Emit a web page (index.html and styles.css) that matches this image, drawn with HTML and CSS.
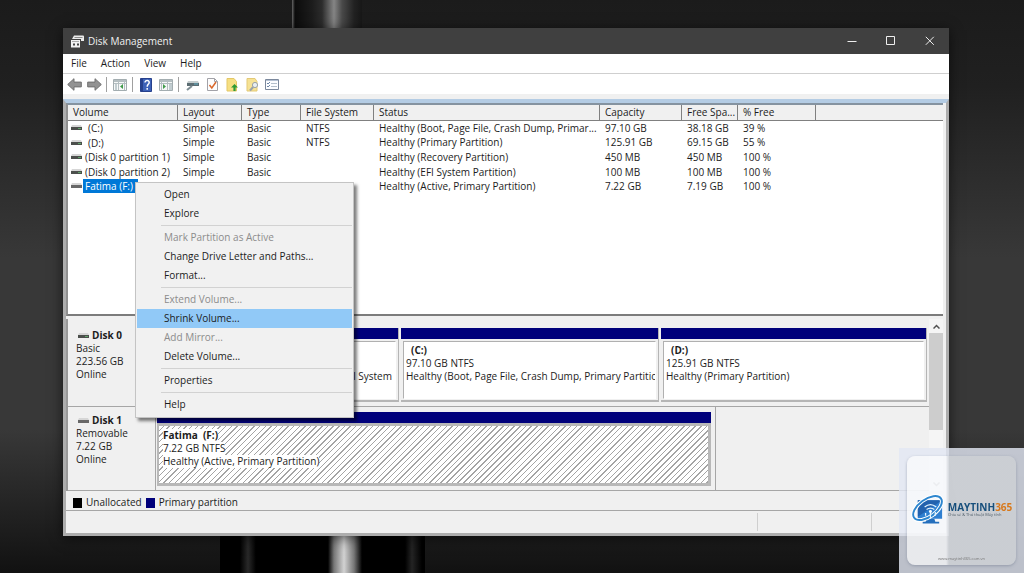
FILE: index.html
```html
<!DOCTYPE html>
<html lang="en">
<head>
  <meta charset="UTF-8">
  <meta name="viewport" content="width=device-width, initial-scale=1.0">
  <title>Disk Management</title>
  <link rel="stylesheet" href="styles.css">
</head>
<body>
  <svg class="defs" width="0" height="0" aria-hidden="true">
    <symbol id="drive" viewBox="0 0 11 6">
      <path d="M1 0h9l1 2H0z" fill="#d6d6d6"/>
      <path d="M0 2h11v3H0z" fill="#4c4f4c"/>
      <path d="M7 3h3v1H7z" fill="#5fa56a"/>
    </symbol>
    <symbol id="drive-usb" viewBox="0 0 11 6">
      <path d="M1 0h9l1 2H0z" fill="#d6d6d6"/>
      <path d="M0 2h11v3H0z" fill="#686868"/>
    </symbol>
    <symbol id="arrow" viewBox="0 0 15 13">
      <path d="M7 .7v3.400h7.300v4.800H7v3.400L.7 6.500z" fill="#929292" stroke="#707070"/>
    </symbol>
  </svg>

  <main class="window">
    <header class="titlebar">
      <svg width="14" height="13" viewBox="0 0 14 13">
        <path d="M4 .5h9q1 0 1 1V6h-3V4H2z" fill="#ececec"/>
        <path d="M4.500 2.500h8" stroke="#8a8a8a"/>
        <path d="M1 5h9v7.500H1z" fill="#f2f2f2"/>
        <path d="M2 6.500h7" stroke="#aaa"/>
        <path d="M3 8.500h2v2H3zM7 8.500h2v2H7z" fill="#444"/>
      </svg>
      <h1>Disk Management</h1>
      <div class="window-buttons">
        <button aria-label="Minimize"><svg width="10" height="10"><path d="M.5 5.500h9"/></svg></button>
        <button aria-label="Maximize"><svg width="10" height="10"><path d="M.5.5h8v8h-8z"/></svg></button>
        <button aria-label="Close"><svg width="10" height="10"><path d="M.8.8l8 8M8.800.8l-8 8"/></svg></button>
      </div>
    </header>

    <nav class="menubar">
      <button>File</button>
      <button>Action</button>
      <button>View</button>
      <button>Help</button>
    </nav>

    <div class="toolbar">
      <button aria-label="Back"><svg width="15" height="13"><use href="#arrow"/></svg></button>
      <button aria-label="Forward"><svg class="flip" width="15" height="13"><use href="#arrow"/></svg></button>
      <span class="divider"></span>
      <button aria-label="Show console tree">
        <svg width="14" height="12" viewBox="0 0 14 12">
          <path d="M.5.5h13v11H.5z" fill="#f6f8f8" stroke="#a3adb0"/>
          <path d="M1 1h12v2H1z" fill="#b4bec1"/>
          <path d="M5.500 3v8M11.500 3v8M1 4.500h12" stroke="#b4bec1"/>
          <path d="M2 6h2M2 8h2M2 10h2" stroke="#8ea3aa"/>
          <path d="M10 5v5L7 7.500z" fill="#3f9a4a"/>
        </svg>
      </button>
      <span class="divider"></span>
      <button aria-label="Help topics">
        <svg width="12" height="14" viewBox="0 0 12 14">
          <path d="M.5.5h11v13H.5z" fill="#3d62b8" stroke="#27418c"/>
          <path d="M1 1h2v12H1z" fill="#27418c"/>
          <path d="M5 4.600c0-3 4.400-2.800 4.200 0C9 6.500 7.200 6.300 7.200 8.700M7.200 10v1.700" fill="none" stroke="#fff" stroke-width="1.500"/>
        </svg>
      </button>
      <button aria-label="Show action pane">
        <svg width="14" height="12" viewBox="0 0 14 12">
          <path d="M.5.5h13v11H.5z" fill="#f6f8f8" stroke="#a3adb0"/>
          <path d="M1 1h12v2H1z" fill="#b4bec1"/>
          <path d="M2.500 3v8M8.500 3v8M1 4.500h12" stroke="#b4bec1"/>
          <path d="M10 6h3M10 8h3M10 10h3" stroke="#8ea3aa"/>
          <path d="M4 5v5l3-2.500z" fill="#3f9a4a"/>
        </svg>
      </button>
      <span class="divider"></span>
      <button aria-label="Refresh">
        <svg width="14" height="12" viewBox="0 0 14 12">
          <path d="M3 2h10l1 2H2z" fill="#c4cccd"/>
          <path d="M2 4h12v3H2z" fill="#5c6d73"/>
          <path d="M9 5h4" stroke="#62b2c8"/>
          <path d="M2 11l5-4" stroke="#7d8c92" stroke-width="2"/>
        </svg>
      </button>
      <button aria-label="Check disk">
        <svg width="11" height="13" viewBox="0 0 11 13">
          <path d="M.5.5h7l3 3v9H.5z" fill="#fdfdfd" stroke="#a2a2a8"/>
          <path d="M7.500.5v3h3" fill="none" stroke="#a2a2a8"/>
          <path d="M2.500 7l2.300 3L9 4" fill="none" stroke="#d9682c" stroke-width="1.500"/>
        </svg>
      </button>
      <button aria-label="Open parent">
        <svg width="13" height="14" viewBox="0 0 13 14">
          <path d="M1 .5h7l2.500 3v9.500H1z" fill="#f6df82" stroke="#e3c767"/>
          <path d="M8.500 6l3.500 3.500H9.600V13H7.400V9.500H5z" fill="#2f9a35"/>
        </svg>
      </button>
      <button aria-label="Search">
        <svg width="13" height="14" viewBox="0 0 13 14">
          <path d="M1 .5h8l2 3v9.500H1z" fill="#f6e294" stroke="#e3c977"/>
          <circle cx="9" cy="7" r="2.600" fill="#e8eef2" stroke="#9aa2a6"/>
          <path d="M7.200 9L4 12.500" stroke="#9aa2a6" stroke-width="2"/>
        </svg>
      </button>
      <button aria-label="Properties">
        <svg width="14" height="11" viewBox="0 0 14 11">
          <path d="M.5.5h13v10H.5z" fill="#fcfdff" stroke="#7b889c"/>
          <path d="M1 1.500h12" stroke="#b5c1d2"/>
          <path d="M6 4.500h6M6 7.500h6" stroke="#b4bfcb"/>
          <path d="M2 4l1 1 2-2M2 7l1 1 2-2" fill="none" stroke="#6c84a4"/>
        </svg>
      </button>
    </div>

    <section class="console">
      <div class="volumes">
        <table>
          <colgroup>
            <col class="c-volume"><col class="c-layout"><col class="c-type"><col class="c-fs"><col class="c-status">
            <col class="c-capacity"><col class="c-free"><col class="c-percent"><col>
          </colgroup>
          <thead>
            <tr><th>Volume</th><th>Layout</th><th>Type</th><th>File System</th><th>Status</th><th>Capacity</th><th>Free Spa...</th><th>% Free</th><th></th></tr>
          </thead>
          <tbody>
            <tr><td><svg width="11" height="6"><use href="#drive"/></svg><span class="name letter">(C:)</span></td><td>Simple</td><td>Basic</td><td>NTFS</td><td>Healthy (Boot, Page File, Crash Dump, Primar...</td><td>97.10 GB</td><td>38.18 GB</td><td>39 %</td><td></td></tr>
            <tr><td><svg width="11" height="6"><use href="#drive"/></svg><span class="name letter">(D:)</span></td><td>Simple</td><td>Basic</td><td>NTFS</td><td>Healthy (Primary Partition)</td><td>125.91 GB</td><td>69.15 GB</td><td>55 %</td><td></td></tr>
            <tr><td><svg width="11" height="6"><use href="#drive"/></svg><span class="name">(Disk 0 partition 1)</span></td><td>Simple</td><td>Basic</td><td></td><td>Healthy (Recovery Partition)</td><td>450 MB</td><td>450 MB</td><td>100 %</td><td></td></tr>
            <tr><td><svg width="11" height="6"><use href="#drive"/></svg><span class="name">(Disk 0 partition 2)</span></td><td>Simple</td><td>Basic</td><td></td><td>Healthy (EFI System Partition)</td><td>100 MB</td><td>100 MB</td><td>100 %</td><td></td></tr>
            <tr><td><svg width="11" height="6"><use href="#drive-usb"/></svg><span class="name selected">Fatima (F:)</span></td><td>Simple</td><td>Basic</td><td>NTFS</td><td>Healthy (Active, Primary Partition)</td><td>7.22 GB</td><td>7.19 GB</td><td>100 %</td><td></td></tr>
          </tbody>
        </table>

        <div class="context-menu" role="menu">
          <button role="menuitem">Open</button>
          <button role="menuitem">Explore</button>
          <hr>
          <button role="menuitem" disabled>Mark Partition as Active</button>
          <button role="menuitem">Change Drive Letter and Paths...</button>
          <button role="menuitem">Format...</button>
          <hr>
          <button role="menuitem" disabled>Extend Volume...</button>
          <button role="menuitem" class="active">Shrink Volume...</button>
          <button role="menuitem" disabled>Add Mirror...</button>
          <button role="menuitem">Delete Volume...</button>
          <hr>
          <button role="menuitem">Properties</button>
          <hr>
          <button role="menuitem">Help</button>
        </div>
      </div>

      <div class="graph">
        <div class="disks">
          <div class="disk">
            <div class="disk-label">
              <h2><svg width="11" height="6"><use href="#drive"/></svg>Disk 0</h2>
              <p>Basic</p>
              <p>223.56 GB</p>
              <p>Online</p>
            </div>
            <div class="partitions four">
              <div class="partition"><div class="info"></div></div>
              <div class="partition"><div class="info align-end"><b></b><p>&nbsp;</p><p>EFI System</p></div></div>
              <div class="partition"><div class="info"><b class="letter">(C:)</b><p>97.10 GB NTFS</p><p>Healthy (Boot, Page File, Crash Dump, Primary Partition)</p></div></div>
              <div class="partition"><div class="info"><b class="letter">(D:)</b><p>125.91 GB NTFS</p><p>Healthy (Primary Partition)</p></div></div>
            </div>
          </div>
          <div class="disk removable">
            <div class="disk-label">
              <h2><svg width="11" height="6"><use href="#drive-usb"/></svg>Disk 1</h2>
              <p>Removable</p>
              <p>7.22 GB</p>
              <p>Online</p>
            </div>
            <div class="partitions single">
              <div class="partition hatched"><div class="info"><b>Fatima&nbsp; (F:)</b><p>7.22 GB NTFS</p><p>Healthy (Active, Primary Partition)</p></div></div>
            </div>
          </div>
        </div>
        <div class="scrollbar">
          <button aria-label="Scroll up"><svg width="7" height="5"><path d="M.5 4.500l3-3 3 3"/></svg></button>
          <div class="thumb"></div>
          <button aria-label="Scroll down"><svg width="7" height="5"><path d="M.5.5l3 3 3-3"/></svg></button>
        </div>
      </div>

      <div class="legend">
        <span class="swatch black"></span>Unallocated
        <span class="swatch navy"></span>Primary partition
      </div>
      <footer class="statusbar"><span></span><span></span><span></span></footer>
    </section>
  </main>

  <aside class="watermark">
    <div class="card">
      <div class="brand">
        <svg width="35" height="32" viewBox="0 0 36 32">
          <path d="M7 6h25v19H7z" fill="#2f7fd0"/>
          <path d="M7 6h25L7 23z" fill="#2362ae"/>
          <path d="M16 25h8l1 3h4v2H12v-2h3z" fill="#256fbd"/>
          <ellipse cx="17" cy="14" rx="17" ry="9" transform="rotate(-36 17 14)" fill="none" stroke="#fff" stroke-width="4"/>
          <ellipse cx="17" cy="14" rx="17" ry="9" transform="rotate(-36 17 14)" fill="none" stroke="#2d86cf" stroke-width="2"/>
          <path d="M14 13q6-5 12 0M16 15.500q4-3 8 0M20 17v8M15 22v-3M25 22v-4" fill="none" stroke="#e5f5ff" stroke-width="1.300"/>
          <circle cx="20" cy="17.500" r="1.500" fill="#fff"/>
        </svg>
        <div>
          <strong>MAYTINH<em>365</em></strong>
          <small>Chia sẻ &amp; Thủ thuật Máy tính</small>
        </div>
      </div>
      <span class="site">www.maytinh365.com.vn</span>
    </div>
  </aside>
</body>
</html>
```
FILE: styles.css
```css
*, *::before, *::after {
  box-sizing: border-box;
}

:root {
  --face: #f0f0f0;
  --line: #a6a6a6;
  --navy: #00007b;
}

body {
  margin: 0;
  min-height: 100vh;
  display: flex;
  flex-direction: column;
  padding: 28px 75px 37px 63px;
  font: 10px/13px "Open Sans", "Noto Sans", sans-serif;
  color: #1c1c1c;
  /* dark wallpaper, bottle neck above and base below the window */
  background:
    linear-gradient(90deg, #666 0, #0c0c0c 3px, #1c1c1c 20px, #2c2c2c 30px, #858585 42px, #4a4a4a 50px, #222 62px, #171717) 292px 0 / 70px 28px no-repeat,
    linear-gradient(90deg, #000 20px, #292929 28px, #000 36px, #000 108px, #777 114px, #d2d2d2 124px, #777 134px, #000 142px, #000 185px, #242424 192px, #000 202px) 220px 100% / 205px 37px no-repeat,
    linear-gradient(180deg, #1b1b1b 0, #202020 15%, #383838 45%, #383838 75%, #1e1e1e 92%, #111 100%);
}

h1, h2, p {
  margin: 0;
  font-size: inherit;
}

button {
  border: 0;
  padding: 0;
  background: none;
  font: inherit;
  color: inherit;
}

svg {
  display: block;
  flex: none;
}

.defs {
  position: absolute;
}

.window {
  flex: 1;
  display: flex;
  flex-direction: column;
  background: #fff;
  box-shadow: 0 2px 12px rgba(0, 0, 0, 0.6);
}

.titlebar {
  height: 26px;
  display: flex;
  align-items: center;
  gap: 4px;
  padding-left: 7px;
  background: #404040;
  color: #f0f0f0;
}

.titlebar h1 {
  flex: 1;
  font-weight: normal;
}

.window-buttons {
  display: flex;
}

.window-buttons button {
  width: 39px;
  height: 26px;
  display: grid;
  place-items: center;
}

.window-buttons path {
  fill: none;
  stroke: #eee;
}

.menubar {
  height: 20px;
  display: flex;
  gap: 14px;
  padding: 0 8px;
  border-bottom: 1px solid #cfcfcf;
}

.toolbar {
  height: 25px;
  display: flex;
  align-items: center;
  padding: 1px 1px 0;
  border-bottom: 5px solid var(--face);
}

.toolbar button {
  width: 20px;
  height: 18px;
  display: grid;
  place-items: center;
}

.flip {
  transform: scaleX(-1);
}

.divider {
  width: 1px;
  height: 15px;
  margin: 0 3px 0 2px;
  background: #a0a0a0;
}

.console {
  flex: 1;
  display: flex;
  flex-direction: column;
  border: 3px solid #adadad;
  border-top: 4px solid #b4cce4;
  background: var(--face);
}

.volumes {
  position: relative;
  flex: 1;
  margin-right: 3px;
  border-top: 2px solid #8593a0;
  border-left: 2px solid #909090;
  border-bottom: 2px solid #7c7c7c;
  background: #fff;
}

table {
  width: 100%;
  height: 89px;
  table-layout: fixed;
  border-collapse: separate;
  border-spacing: 0;
}

.c-volume { width: 110px; }
.c-layout { width: 64px; }
.c-type { width: 59px; }
.c-fs { width: 73px; }
.c-status { width: 226px; }
.c-capacity { width: 82px; }
.c-free { width: 56px; }
.c-percent { width: 78px; }

th {
  height: 16px;
  padding: 0 0 0 5px;
  background: var(--face);
  border-right: 1px solid #808080;
  border-bottom: 1px solid #808080;
  font-weight: normal;
  text-align: left;
  white-space: nowrap;
}

th:last-child {
  border-right: 0;
}

td {
  padding: 0 0 0 5px;
  white-space: nowrap;
}

td:first-child {
  display: flex;
  align-items: center;
  gap: 1px;
  padding-left: 3px;
}

.name {
  padding: 0 2px;
  line-height: 14px;
}

.name.letter {
  padding-left: 5px;
}

.name.selected {
  padding-right: 5px;
  background: #0078d7;
  color: #fff;
}

.context-menu {
  position: absolute;
  z-index: 2;
  top: 77px;
  left: 67px;
  width: 219px;
  display: flex;
  flex-direction: column;
  padding: 2px 1px 3px;
  background: #f1f1f1;
  border: 1px solid #c4c4c4;
  box-shadow: 3px 3px 3px rgba(0, 0, 0, 0.5);
}

.context-menu button {
  height: 19px;
  padding-left: 27px;
  text-align: left;
}

.context-menu button:disabled {
  color: #8c8c8c;
}

.context-menu .active {
  background: #91c9f7;
}

.context-menu hr {
  width: calc(100% - 24px);
  height: 1px;
  margin: 2px 0 2px 24px;
  border: 0;
  background: #d2d2d2;
}

.graph {
  display: flex;
  margin-top: 3px;
  margin-right: 3px;
  border-left: 2px solid #999;
}

.disks {
  flex: 1;
  min-width: 0;
}

.disk {
  height: 88px;
  display: flex;
  padding-top: 9px;
  border-bottom: 1px solid var(--line);
}

.disk-label {
  width: 88px;
  padding: 1px 0 0 8px;
}

.disk-label h2 {
  display: flex;
  align-items: center;
  gap: 3px;
  padding-left: 2px;
}

.partitions {
  flex: 1;
  min-width: 0;
  display: grid;
  gap: 2px;
}

.partitions.four {
  grid-template-columns: 134fr 106fr 258fr 266fr;
  padding: 0 2px 4px 1px;
}

.partition {
  min-width: 0;
  display: flex;
  flex-direction: column;
  border-right: 1px solid #b5b5b5;
  border-bottom: 2px solid #b5b5b5;
}

.partition::before {
  content: "";
  height: 11px;
  background: var(--navy);
}

.info {
  flex: 1;
  margin: 2px 2px 1px;
  padding: 2px;
  border: 1px solid #b0b0b0;
  border-right-color: #fff;
  border-bottom-color: #fff;
  background: #fff;
  overflow: hidden;
  white-space: nowrap;
}

.info.align-end {
  padding-right: 3px;
  text-align: right;
}

.info b {
  display: block;
  min-height: 13px;
}

.info b.letter {
  padding-left: 5px;
}

.disk.removable {
  height: 84px;
  padding-top: 0;
}

.removable .disk-label {
  padding-top: 7px;
  border-right: 1px solid var(--line);
}

.partitions.single {
  flex: none;
  width: 65%;
  padding: 5px 4px 4px 1px;
  border-right: 1px solid var(--line);
}

.hatched {
  border: 0;
}

.hatched .info {
  margin: 0;
  padding: 3px 4px;
  border: 3px solid #b8b8b8;
  border-left-width: 2px;
  background: repeating-linear-gradient(135deg, #fff 0, #fff 3px, #a4a4a4 3px, #a4a4a4 4px);
}

.hatched .info b, .hatched .info p {
  width: fit-content;
  background: #fff;
}

.scrollbar {
  width: 14px;
  display: flex;
  flex-direction: column;
  background: #f5f5f5;
}

.scrollbar button {
  height: 14px;
  display: grid;
  place-items: center;
}

.scrollbar path {
  fill: none;
  stroke: #505050;
  stroke-width: 1.5;
}

.thumb {
  height: 97px;
  margin-bottom: auto;
  background: #cdcdcd;
}

.legend {
  height: 20px;
  display: flex;
  align-items: center;
  gap: 4px;
  padding: 4px 7px 0;
  border-bottom: 1px solid var(--line);
}

.swatch {
  width: 9px;
  height: 10px;
}

.swatch.black {
  background: #000;
}

.swatch.navy {
  background: var(--navy);
}

.statusbar {
  height: 22px;
  display: grid;
  grid-template-columns: 1fr 114px 75px;
  padding: 2px 0;
}

.statusbar span + span {
  border-left: 1px solid #cfcfcf;
}

.watermark {
  position: fixed;
  right: 0;
  bottom: 0;
  z-index: 3;
  width: 125px;
  height: 125px;
  padding: 8px;
  background: rgba(226, 231, 243, 0.82);
}

.card {
  height: 100%;
  display: flex;
  flex-direction: column;
  align-items: center;
  padding: 38px 6px 3px;
  border-radius: 8px;
  background: linear-gradient(90deg, rgba(255, 255, 255, 0.65) 39px, rgba(208, 211, 214, 0.7) 42px);
  box-shadow: 0 1px 3px rgba(110, 120, 140, 0.5);
}

.brand {
  display: flex;
  align-items: center;
  gap: 2px;
}

.brand strong, .brand small {
  display: block;
  line-height: 9px;
  white-space: nowrap;
}

.brand strong {
  font-family: "Open Sans", sans-serif;
  font-size: 10px;
  color: #174f7c;
}

.brand em {
  font-style: normal;
  color: #d8791c;
}

.brand small {
  font-size: 4px;
  line-height: 6px;
  color: #4d5c68;
}

.site {
  margin-top: auto;
  font-size: 4px;
  line-height: 6px;
  color: #777;
}
```
